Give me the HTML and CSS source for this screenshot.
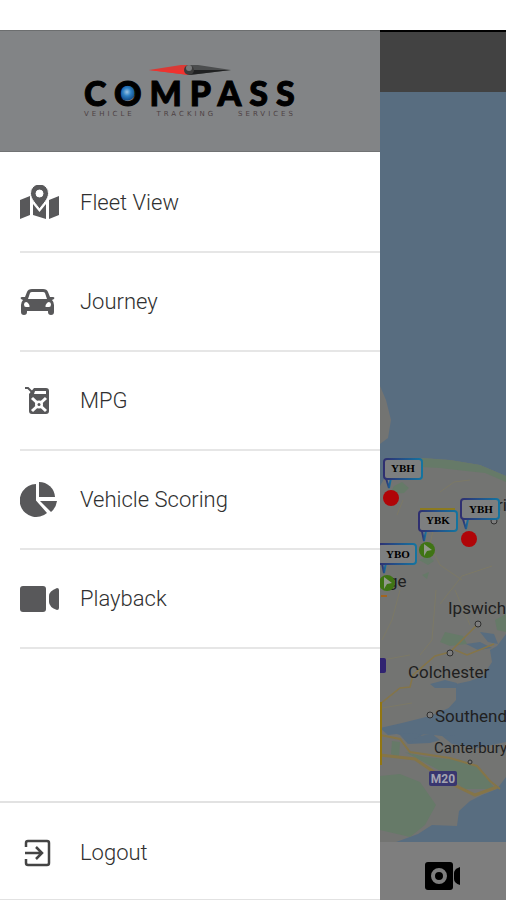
FILE: index.html
```html
<!DOCTYPE html>
<html lang="en">
<head>
<meta charset="UTF-8" />
<meta name="viewport" content="width=device-width, initial-scale=1" />
<title>Compass Vehicle Tracking</title>
<link rel="stylesheet" href="styles.css">
</head>
<body>

<div class="statusbar"></div>

<div class="app">
  <aside class="drawer">
    <div class="drawer-header">
      <svg class="needle" viewBox="0 0 82 12" aria-hidden="true">
        <path d="M0 6 L32 1 L40 1 V11 L32 10 Z" fill="#d93a36" />
        <path d="M0 6 L40 6 V11 L32 10 Z" fill="#f0322e" />
        <path d="M82 6 L49 1 L40 1 V11 L49 10 Z" fill="#4b4d4e" />
        <path d="M82 6 L40 6 V11 L49 10 Z" fill="#202122" />
        <circle cx="40" cy="6" r="5" fill="#3c3c3c" />
        <circle cx="40" cy="4" r="3" fill="#77797a" />
      </svg>
      <div class="brand">C<span class="globe">O</span>MPASS</div>
      <div class="tagline"><span>VEHICLE</span><span>TRACKING</span><span>SERVICES</span></div>
    </div>

    <nav class="menu">
      <a href="#fleet">
        <svg viewBox="0 0 40 36" aria-hidden="true">
          <path d="M0 15 L10 11 V30 L0 34 Z M29 15 L39 11 V30 L29 34 Z" />
          <path d="M13 19 V30 L26 34 V19 L19.500 27 Z" />
          <path fill-rule="evenodd" stroke="white" stroke-width="1" d="M19.500 -1 A9 9 0 0 0 10.500 8.500 C10.500 14 16 19 19.500 24 C23 19 28.500 14 28.500 8.500 A9 9 0 0 0 19.500 -1 Z M19.500 5 A3.500 3.500 0 1 1 19.500 12 A3.500 3.500 0 1 1 19.500 5 Z" />
        </svg>
        <span>Fleet View</span>
      </a>
      <a href="#journey">
        <svg viewBox="0 0 40 36" aria-hidden="true">
          <path fill-rule="evenodd" d="M12 5 H23 Q27 5 28 8 L30 13 H33 Q35 13 34 15 L32 16 Q34 18 34 21 V28 Q34 31 31 31 Q28 31 28 28 V27 H7 V28 Q7 31 4 31 Q1 31 1 28 V21 Q1 18 3 16 L1 15 Q0 13 2 13 H5 L7 8 Q8 5 12 5 Z M12 8 Q10.500 8 10 9 L8 15 H27 L25 9 Q24.500 8 23 8 Z M6 18 Q4 18 4 20.500 Q4 23 6 23 H9.500 Q10 21 8 19 Q7 18 6 18 Z M29 18 Q31 18 31 20.500 Q31 23 29 23 H25.500 Q25 21 27 19 Q28 18 29 18 Z" />
        </svg>
        <span>Journey</span>
      </a>
      <a href="#mpg">
        <svg viewBox="0 0 40 36" aria-hidden="true">
          <path d="M5 5 H8 L13 10" fill="none" stroke="#58585a" stroke-width="2" />
          <path fill-rule="evenodd" d="M14 5 H26 Q29 5 29 8 V28 Q29 31 26 31 H12 Q9 31 9 28 V11 Z M15 8 L14 11 H26 V8 Z" />
          <path d="M12 15 L26 28 M26 15 L12 28" stroke="white" stroke-width="3" />
          <circle cx="19" cy="21.500" r="4" fill="white" />
          <circle cx="19" cy="21.500" r="1.500" />
        </svg>
        <span>MPG</span>
      </a>
      <a href="#scoring">
        <svg viewBox="0 0 40 36" aria-hidden="true">
          <path d="M15 2 V18.500 L26 31 A16.500 16.500 0 1 1 15 2 Z" transform="translate(1 0)" />
          <path d="M19 0 A16 16 0 0 1 35 15 H19 Z" />
          <path d="M20 19 H37 Q36 26 31 30 Z" />
        </svg>
        <span>Vehicle Scoring</span>
      </a>
      <a href="#playback">
        <svg viewBox="0 0 40 36" aria-hidden="true">
          <rect x="0" y="5" width="26" height="26" rx="3" />
          <path d="M37 7 Q39 7 39 9 V27 Q39 29 37 29 Q29 26 29 21 V15 Q29 10 37 7 Z" />
        </svg>
        <span>Playback</span>
      </a>
    </nav>

    <a class="logout" href="#logout">
      <svg viewBox="0 0 40 36" aria-hidden="true">
        <path d="M6 12 V8 Q6 6 8 6 H27 Q29 6 29 8 V28 Q29 30 27 30 H8 Q6 30 6 28 V24 M5 18 H21 M16 12 L22 18 L16 24" fill="none" stroke="#444" stroke-width="2.500" />
      </svg>
      <span>Logout</span>
    </a>
  </aside>

  <main class="page">
    <div class="toolbar"></div>
    <div class="map">
      <svg viewBox="380 92 126 750" preserveAspectRatio="xMinYMin slice" role="img" aria-label="Vehicle map">
        <defs>
          <linearGradient id="tagEdge" x1="0" y1="0" x2="1" y2="0">
            <stop offset="0" stop-color="#2f2f70" />
            <stop offset="0.500" stop-color="#22528a" />
            <stop offset="1" stop-color="#1474a0" />
          </linearGradient>
        </defs>
        <!-- land -->
        <g fill="#737472">
          <path d="M380 386 L386 400 L391 420 L388 438 L380 444 Z" />
          <path d="M380 486 L388 472 L400 464 L422 458 L450 460 L480 465 L506 476 V634 L497 646 L490 650 L492 662 L483 676 L470 681 L456 684 L456 700 L446 711 L430 717 L405 725 L380 730 Z" />
          <path d="M380 729 L400 735 L408 744 L425 733 L442 736 L452 744 L478 748 L506 742 V777 L497 789 L482 795 L470 801 L459 811 L457 826 L432 825 L418 834 L396 842 H380 Z" />
        </g>
        <!-- parks -->
        <g fill="#667a68">
          <path d="M422 458 L450 460 L480 465 L506 476 V482 L485 473 L466 471 L440 468 L420 467 Z" />
          <path d="M394 486 L402 482 L409 488 L404 493 L390 494 Z" />
          <path d="M440 642 L445 632 L463 636 L467 644 L450 646 Z M495 620 L506 614 V632 L497 630 Z" />
          <path d="M405 752 L425 757 L460 760 L478 766 L495 789 L464 789 L446 774 Z" />
          <path d="M380 776 L400 774 L420 782 L436 805 L425 825 L410 837 L380 830 Z M392 741 L400 742 L399 757 L391 754 Z" />
          <path d="M419 560 L429 556 L434 561 L428 565 Z M422 575 L429 572 L427 579 Z" />
        </g>
        <!-- rivers -->
        <g fill="#586d80">
          <path d="M430 684 L445 680 L457 683 L456 688 L435 688 Z M466 644 L480 642 L492 648 L478 650 Z M480 632 L494 634 L498 644 L488 642 Z" />
          <path d="M408 744 L419 736 L432 734 L440 740 L430 743 Z M380 728 L402 723 L430 716 L456 705 V736 L430 735 L405 733 L388 735 Z" />
        </g>
        <!-- roads -->
        <g fill="none" stroke="#7c7966" stroke-width="1">
          <path d="M397 515 L403 500 M440 492 L454 482 L470 480 M435 520 L430 545 L440 565 L462 580 M492 566 L480 570 L462 576 L440 604 M436 590 L432 640 L420 655 M382 660 L410 655 M455 590 L470 625 M382 640 L392 620 L400 590 M382 708 L412 703" />
        </g>
        <g fill="none" stroke="#857548" stroke-width="1.500">
          <path d="M380 704 L400 688 L410 687 L413 675 L435 656 L450 652 L478 624 M455 650 L467 655 L494 644" />
          <path d="M380 735 L400 739 L410 752 L450 758 L477 766 L490 781 L500 789" stroke-width="2" />
          <path d="M380 755 L415 759 L450 783 L475 795 L497 787" stroke-width="3" />
        </g>
        <path d="M380 702 V765" stroke="#927612" stroke-width="4" />
        <path d="M420 509 H455" stroke="#8b7a20" stroke-width="2" />
        <path d="M381 596 H387" stroke="#a2641e" stroke-width="2" />

        <!-- towns -->
        <g class="dot">
          <circle cx="478" cy="624" r="3" />
          <circle cx="450" cy="653" r="3" />
          <circle cx="430" cy="715" r="3" />
          <circle cx="470" cy="762" r="2" />
          <circle cx="494" cy="521" r="3" />
        </g>
        <g class="town">
          <text x="448" y="614">Ipswich</text>
          <text x="408" y="678">Colchester</text>
          <text x="435" y="722">Southend</text>
          <text x="434" y="753" class="small">Canterbury</text>
          <text x="388" y="587">ge</text>
          <text x="497" y="511">ri</text>
        </g>
        <rect x="429" y="771" width="28" height="15" rx="2" fill="#38366f" />
        <text class="road" x="443" y="783">M20</text>
        <rect x="370" y="658" width="16" height="15" rx="2" fill="#302371" />

        <!-- vehicles -->
        <g class="tag">
          <path d="M386 478 L389 488 L391 478 Z" />
          <rect x="384" y="459" width="38" height="20" rx="3" />
          <path d="M463 519 L466 529 L468 519 Z" />
          <rect x="461" y="499" width="38" height="20" rx="3" />
          <path d="M422 531 L424 541 L426 531 Z" />
          <rect x="419" y="511" width="38" height="20" rx="3" />
          <path d="M382 563 L384 573 L386 563 Z" />
          <rect x="378" y="544" width="38" height="20" rx="3" />
          <text x="403" y="472">YBH</text>
          <text x="481" y="513">YBH</text>
          <text x="438" y="524">YBK</text>
          <text x="398" y="558">YBO</text>
        </g>
        <circle cx="391" cy="498" r="8" fill="#b00508" />
        <circle cx="469" cy="539" r="8" fill="#b00508" />
        <circle cx="427" cy="550" r="8" fill="#3f7414" />
        <path d="M424 544 L432 550 L427 551 L424 556 Z" fill="#92998c" />
        <circle cx="387" cy="583" r="8" fill="#3f7414" />
        <path d="M384 577 L392 583 L387 584 L384 589 Z" fill="#92998c" />
      </svg>
    </div>
    <div class="bottombar">
      <button type="button" aria-label="Camera">
        <svg viewBox="0 0 36 28" aria-hidden="true">
          <rect x="0" y="0" width="28" height="28" rx="3" />
          <circle cx="14" cy="14" r="6" fill="none" stroke="#7e7e7e" stroke-width="4" />
          <path d="M35 5 V23 Q29 21 29 17 V11 Q29 7 35 5 Z" />
        </svg>
      </button>
    </div>
  </main>
</div>

</body>
</html>
```

FILE: styles.css
```css
* {
  box-sizing: border-box;
}
body {
  margin: 0;
  min-height: 100vh;
  display: flex;
  flex-direction: column;
  background-color: white;
  font-family: Roboto, sans-serif;
}
.statusbar {
  height: 30px;
}
.app {
  flex: 1;
  display: flex;
}

/* drawer */
.drawer {
  width: 80%;
  max-width: 380px;
  display: flex;
  flex-direction: column;
  background-color: white;
}
.drawer-header {
  height: 122px;
  display: flex;
  flex-direction: column;
  align-items: center;
  padding-top: 33px;
  background-color: #828486;
  border-top: 1px solid #6c6e6f;
  border-bottom: 1px solid #717374;
}
.needle {
  width: 82px;
  height: 12px;
}
.brand {
  width: 212px;
  font-family: Lato, sans-serif;
  font-weight: 900;
  font-size: 34px;
  line-height: 34px;
  letter-spacing: 8px;
  white-space: nowrap;
  color: black;
  -webkit-text-stroke: 1px black;
}
.globe {
  background: radial-gradient(circle at 13px 20px, #9cc4e4 0, #2c7fc4 4px, #17508c 8px, transparent 9px);
}
.tagline {
  width: 212px;
  display: flex;
  justify-content: space-between;
  font-family: "DejaVu Sans", sans-serif;
  font-size: 7px;
  line-height: 8px;
  letter-spacing: 3px;
  color: #4d4143;
}
.menu {
  flex: 1;
  padding-top: 2px;
  padding-left: 20px;
}
.menu a,
.logout {
  display: flex;
  align-items: center;
  gap: 20px;
  height: 99px;
  color: #303030;
  font-size: 22px;
  font-weight: 300;
  text-decoration: none;
}
.menu a {
  border-bottom: 2px solid #e6e6e6;
}
.menu svg,
.logout svg {
  width: 40px;
  height: 36px;
  fill: #58585a;
}
.logout {
  padding-top: 3px;
  padding-left: 20px;
  border-top: 2px solid #e2e2e2;
  border-bottom: 1px solid #e2e2e2;
}

/* page under the scrim */
.page {
  flex: 1;
  min-width: 0;
  display: flex;
  flex-direction: column;
}
.toolbar {
  height: 62px;
  background-color: #424242;
  border-top: 2px solid black;
}
.map {
  flex: 1;
  display: flex;
  overflow: hidden;
  background-color: #586d80;
}
.map svg {
  width: 100%;
}
.dot {
  fill: #7d7d7d;
  stroke: #2f2f2f;
  stroke-width: 1;
}
.town {
  fill: #202020;
  font-size: 17px;
}
.town .small {
  font-size: 15px;
}
.road {
  fill: #a4a4b0;
  font-size: 12px;
  font-weight: 700;
  text-anchor: middle;
}
.tag rect,
.tag path {
  fill: #7d7f80;
  stroke: url(#tagEdge);
  stroke-width: 2;
}
.tag text {
  fill: black;
  font-family: "Liberation Serif", serif;
  font-size: 11px;
  font-weight: 700;
  text-anchor: middle;
}
.bottombar {
  height: 58px;
  display: flex;
  justify-content: center;
  align-items: center;
  padding-top: 10px;
  background-color: #7e7e7e;
}
.bottombar button {
  padding: 0;
  border: none;
  background: none;
}
.bottombar svg {
  display: block;
  width: 36px;
  height: 28px;
}
```
